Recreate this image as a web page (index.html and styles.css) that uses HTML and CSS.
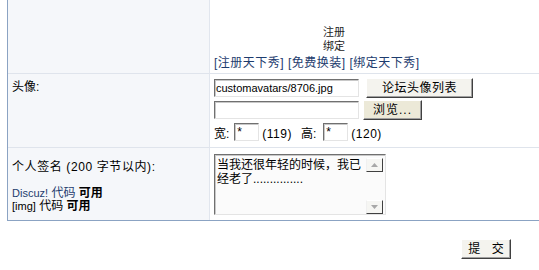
FILE: index.html
```html
<!DOCTYPE html>
<html lang="zh-CN">
<head>
<meta charset="utf-8">
<title>个人资料</title>
<link rel="stylesheet" href="styles.css">
</head>
<body>
<div class="form">
  <div class="lab row1"></div>
  <div class="val row1">
    <div class="pics"><span>注册</span><span>绑定</span></div>
    <div class="links"><a href="#">[注册天下秀]</a> <a href="#">[免费换装]</a> <a href="#">[绑定天下秀]</a></div>
  </div>

  <div class="lab row2">头像:</div>
  <div class="val row2">
    <div class="line">
      <div class="txt w145 path">customavatars/8706.jpg</div>
      <button class="btn list">论坛头像列表</button>
    </div>
    <div class="line l2">
      <div class="txt w145"></div>
      <button class="btn browse">浏览...</button>
    </div>
    <div class="line l3">
      <span>宽:</span><div class="txt num">*</div><span class="dim">(119)</span>
      <span class="hlab">高:</span><div class="txt num num2">*</div><span class="dim">(120)</span>
    </div>
  </div>

  <div class="lab row3">
    <div class="sig">个人签名 (200 字节以内):</div>
    <div class="code"><a href="#" class="dz">Discuz!</a> <a href="#">代码</a> <b>可用</b></div>
    <div class="code"><span class="dz">[img]</span> 代码 <b>可用</b></div>
  </div>
  <div class="val row3">
    <div class="ta">
      <div class="ta-text">当我还很年轻的时候，我已经老了...............</div>
      <div class="sb">
        <span class="sb-btn"><svg width="7" height="4" viewBox="0 0 7 4"><polygon points="0,4 3.5,0 7,4" fill="#a8a8a8"/></svg></span>
        <span class="sb-btn"><svg width="7" height="4" viewBox="0 0 7 4"><polygon points="0,0 3.5,4 7,0" fill="#a8a8a8"/></svg></span>
      </div>
    </div>
  </div>
</div>
<div class="actions">
  <button class="btn submit">提 交</button>
</div>
</body>
</html>
```

FILE: styles.css
```css
html, body {
  margin: 0;
  padding: 0;
  background: #fff;
  overflow: hidden;
}
body {
  font: 12px/14px "Liberation Sans", "Noto Sans CJK SC", sans-serif;
  color: #000;
}
a {
  color: #1d3c6e;
  text-decoration: none;
}
.form {
  margin-left: 7px;
  border-left: 1px solid #8ba3c3;
  border-bottom: 1px solid #8ba3c3;
  display: grid;
  grid-template-columns: 202px 1fr;
}
.lab {
  background: #f5f7fa;
  border-right: 1px solid #e1e6ee;
  padding-left: 4px;
}
.val {
  background: #fff;
  padding-left: 4px;
}
.row1, .row2 {
  border-bottom: 1px solid #dfe4ec;
}
.row1 {
  height: 74px;
  box-sizing: border-box;
  padding-bottom: 2px;
}
.val.row1 {
  display: flex;
  flex-direction: column;
  justify-content: flex-end;
}
.pics {
  width: 240px;
  display: flex;
  flex-direction: column;
  align-items: center;
  font-size: 11px;
  line-height: 14px;
  color: #222;
  margin-bottom: 2px;
}
.links {
  line-height: 16px;
  white-space: nowrap;
  letter-spacing: 0.5px;
}
.row2 {
  height: 74px;
  box-sizing: border-box;
}
.lab.row2 {
  padding-top: 6px;
}
.val.row2 {
  padding-top: 4px;
}
.line {
  display: flex;
  align-items: center;
  height: 20px;
}
.l2, .l3 {
  margin-top: 2px;
}
.l3 {
  align-items: flex-end;
  height: 20px;
}
.l3 span {
  line-height: 16px;
}
.dim {
  letter-spacing: 0.5px;
}
.txt {
  box-sizing: border-box;
  height: 18px;
  border: 1px solid;
  border-color: #707070 #e4e4e4 #e4e4e4 #707070;
  box-shadow: inset 1px 1px 0 #c8c8c8;
  background: #fff;
  padding: 1px 0 0 2px;
  line-height: 15px;
  white-space: nowrap;
  overflow: hidden;
}
.path {
  font-size: 11px;
  padding-left: 1px;
}
.w145 {
  width: 145px;
}
.num {
  width: 25px;
  margin: 0 3px 1px 5px;
}
.num2 {
  margin-left: 7px;
}
.hlab {
  margin-left: 9px;
}
.btn {
  font: 12px/14px "Liberation Sans", "Noto Sans CJK SC", sans-serif;
  color: #000;
  box-sizing: border-box;
  height: 20px;
  padding: 0;
  border: 1px solid;
  border-color: #fff #404040 #404040 #fff;
  box-shadow: inset -1px -1px 0 #a0a0a0;
  background: #f4f3ee;
}
.list {
  width: 107px;
  margin-left: 7px;
  letter-spacing: 0.5px;
}
.browse {
  width: 59px;
  margin-left: 4px;
  background: #ece9d8;
  letter-spacing: 1px;
}
.row3 {
  height: 72px;
  box-sizing: border-box;
}
.lab.row3 {
  padding-top: 12px;
}
.sig {
  margin-bottom: 13px;
  letter-spacing: 0.6px;
}
.code {
  line-height: 13px;
}
.dz {
  font-size: 11px;
}
.val.row3 {
  padding-top: 6px;
}
.ta {
  box-sizing: border-box;
  width: 172px;
  height: 61px;
  border: 1px solid;
  border-color: #707070 #e4e4e4 #e4e4e4 #707070;
  box-shadow: inset 1px 1px 0 #c8c8c8;
  background: #fbfbfb;
  display: flex;
}
.ta-text {
  flex: 1;
  padding: 3px 0 0 2px;
  line-height: 14px;
  word-break: break-all;
}
.sb {
  width: 18px;
  display: flex;
  flex-direction: column;
  justify-content: space-between;
  padding: 3px 1px 0 0;
}
.sb-btn {
  box-sizing: border-box;
  width: 17px;
  height: 14px;
  border: 1px solid;
  border-color: #fff #404040 #404040 #f0f0f0;
  background: #f6f6f3;
  display: flex;
  align-items: center;
  justify-content: center;
}
.actions {
  display: flex;
  justify-content: flex-end;
  padding-right: 28px;
  margin-top: 18px;
}
.submit {
  width: 50px;
  letter-spacing: 4px;
  padding-left: 4px;
}
```
